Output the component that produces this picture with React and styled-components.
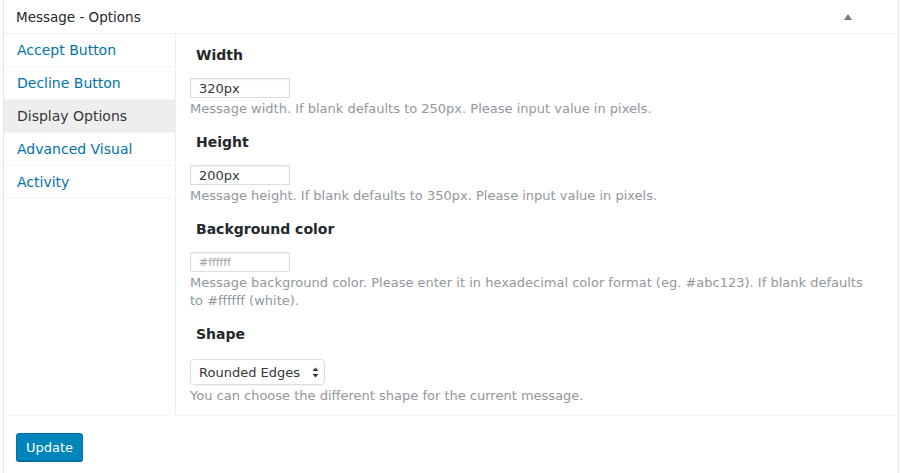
import React from 'react'
import styled, { createGlobalStyle } from 'styled-components'

const GlobalStyle = createGlobalStyle`
  body {
    margin: 0;
    background: #fff;
    font-family: "DejaVu Sans", Verdana, sans-serif;
    color: #23282d;
  }
`

const tabs = ['Accept Button', 'Decline Button', 'Display Options', 'Advanced Visual', 'Activity']

const App = () => {
  return (
    <Page>
      <GlobalStyle />
      <Panel>
        <PanelHeader>
          <PanelTitle>Message - Options</PanelTitle>
          <Toggle />
        </PanelHeader>
        <PanelBody>
          <Sidebar>
            {tabs.map((t) => (
              <Tab key={t} active={t === 'Display Options'}>{t}</Tab>
            ))}
          </Sidebar>
          <Content>
            <Field>
              <Label>Width</Label>
              <TextInput defaultValue="320px" />
              <Description>Message width. If blank defaults to 250px. Please input value in pixels.</Description>
            </Field>
            <Field>
              <Label>Height</Label>
              <TextInput defaultValue="200px" />
              <Description>Message height. If blank defaults to 350px. Please input value in pixels.</Description>
            </Field>
            <Field>
              <Label>Background color</Label>
              <TextInput placeholder="#ffffff" small />
              <Description>
                Message background color. Please enter it in hexadecimal color format (eg. #abc123). If blank defaults to #ffffff (white).
              </Description>
            </Field>
            <Field>
              <Label>Shape</Label>
              <Select>
                Rounded Edges
                <Arrows>
                  <svg width="7" height="11" viewBox="0 0 7 11">
                    <path d="M3.5 0.5 L6.5 4 H0.5 Z M3.5 10.5 L6.5 7 H0.5 Z" fill="#333" />
                  </svg>
                </Arrows>
              </Select>
              <Description>You can choose the different shape for the current message.</Description>
            </Field>
          </Content>
        </PanelBody>
        <Footer>
          <UpdateButton>Update</UpdateButton>
        </Footer>
      </Panel>
    </Page>
  )
}

const Page = styled.div`
  padding-left: 3px;
  height: 473px;
  overflow: hidden;
`

const Panel = styled.div`
  width: 894px;
  min-height: 480px;
  border: 1px solid #e5e5e5;
  border-top: none;
  box-shadow: 0 1px 1px rgba(0, 0, 0, 0.04);
`

const PanelHeader = styled.div`
  display: flex;
  align-items: center;
  justify-content: space-between;
  height: 34px;
  padding: 0 46px 0 12px;
  border-bottom: 1px solid #eee;
  box-sizing: border-box;
`

const PanelTitle = styled.h2`
  margin: 0;
  font-size: 13.5px;
  font-weight: 400;
  color: #23282d;
`

const Toggle = styled.span`
  width: 0;
  height: 0;
  border-left: 4px solid transparent;
  border-right: 4px solid transparent;
  border-bottom: 6px solid #72777c;
  margin-top: 1px;
`

const PanelBody = styled.div`
  display: flex;
`

const Sidebar = styled.ul`
  list-style: none;
  margin: 0;
  padding: 0;
  width: 171px;
  flex-shrink: 0;
  border-right: 1px solid #eee;
`

const Tab = styled.li`
  height: 33px;
  display: flex;
  align-items: center;
  padding-left: 13px;
  font-size: 14px;
  color: ${(p) => (p.active ? '#32373c' : '#0073aa')};
  background: ${(p) => (p.active ? '#eee' : '#fff')};
  border-bottom: 1px solid #f4f4f4;
  box-sizing: border-box;
`

const Content = styled.div`
  flex: 1;
  padding: 11px 28px 10px 14px;
`

const Field = styled.div`
  margin-bottom: 14px;
  &:last-child {
    margin-bottom: 0;
  }
`

const Label = styled.h4`
  margin: 0 0 13px 6px;
  font-size: 14px;
  font-weight: 700;
  color: #23282d;
  line-height: 20px;
`

const TextInput = styled.input`
  display: block;
  width: 100px;
  height: 20px;
  box-sizing: border-box;
  margin: 0;
  padding: 0 8px;
  border: 1px solid #ddd;
  box-shadow: inset 0 1px 2px rgba(0, 0, 0, 0.07);
  font-family: "DejaVu Sans", Verdana, sans-serif;
  font-size: ${(p) => (p.small ? '11px' : '13px')};
  color: #32373c;
  outline: none;
  &::placeholder {
    color: #a0a5aa;
  }
`

const Select = styled.div`
  display: inline-flex;
  align-items: center;
  gap: 12px;
  height: 26px;
  margin-top: 2px;
  box-sizing: border-box;
  padding: 0 5px 0 8px;
  border: 1px solid #ddd;
  border-radius: 4px;
  font-size: 13px;
  color: #32373c;
  box-shadow: 0 1px 1px rgba(0, 0, 0, 0.04);
`

const Arrows = styled.span`
  display: flex;
  align-items: center;
`

const Description = styled.p`
  margin: 2px 0 0;
  font-size: 13px;
  line-height: 18px;
  color: #92979c;
`

const Footer = styled.div`
  padding: 17px 12px;
  border-top: 1px solid #f8f8f8;
`

const UpdateButton = styled.button`
  height: 28px;
  padding: 0 9px;
  background: #0085ba;
  border: 1px solid #0073aa;
  border-radius: 3px;
  box-shadow: 0 1px 0 #006799;
  color: #fff;
  font-family: "DejaVu Sans", Verdana, sans-serif;
  font-size: 13px;
`

export default App
